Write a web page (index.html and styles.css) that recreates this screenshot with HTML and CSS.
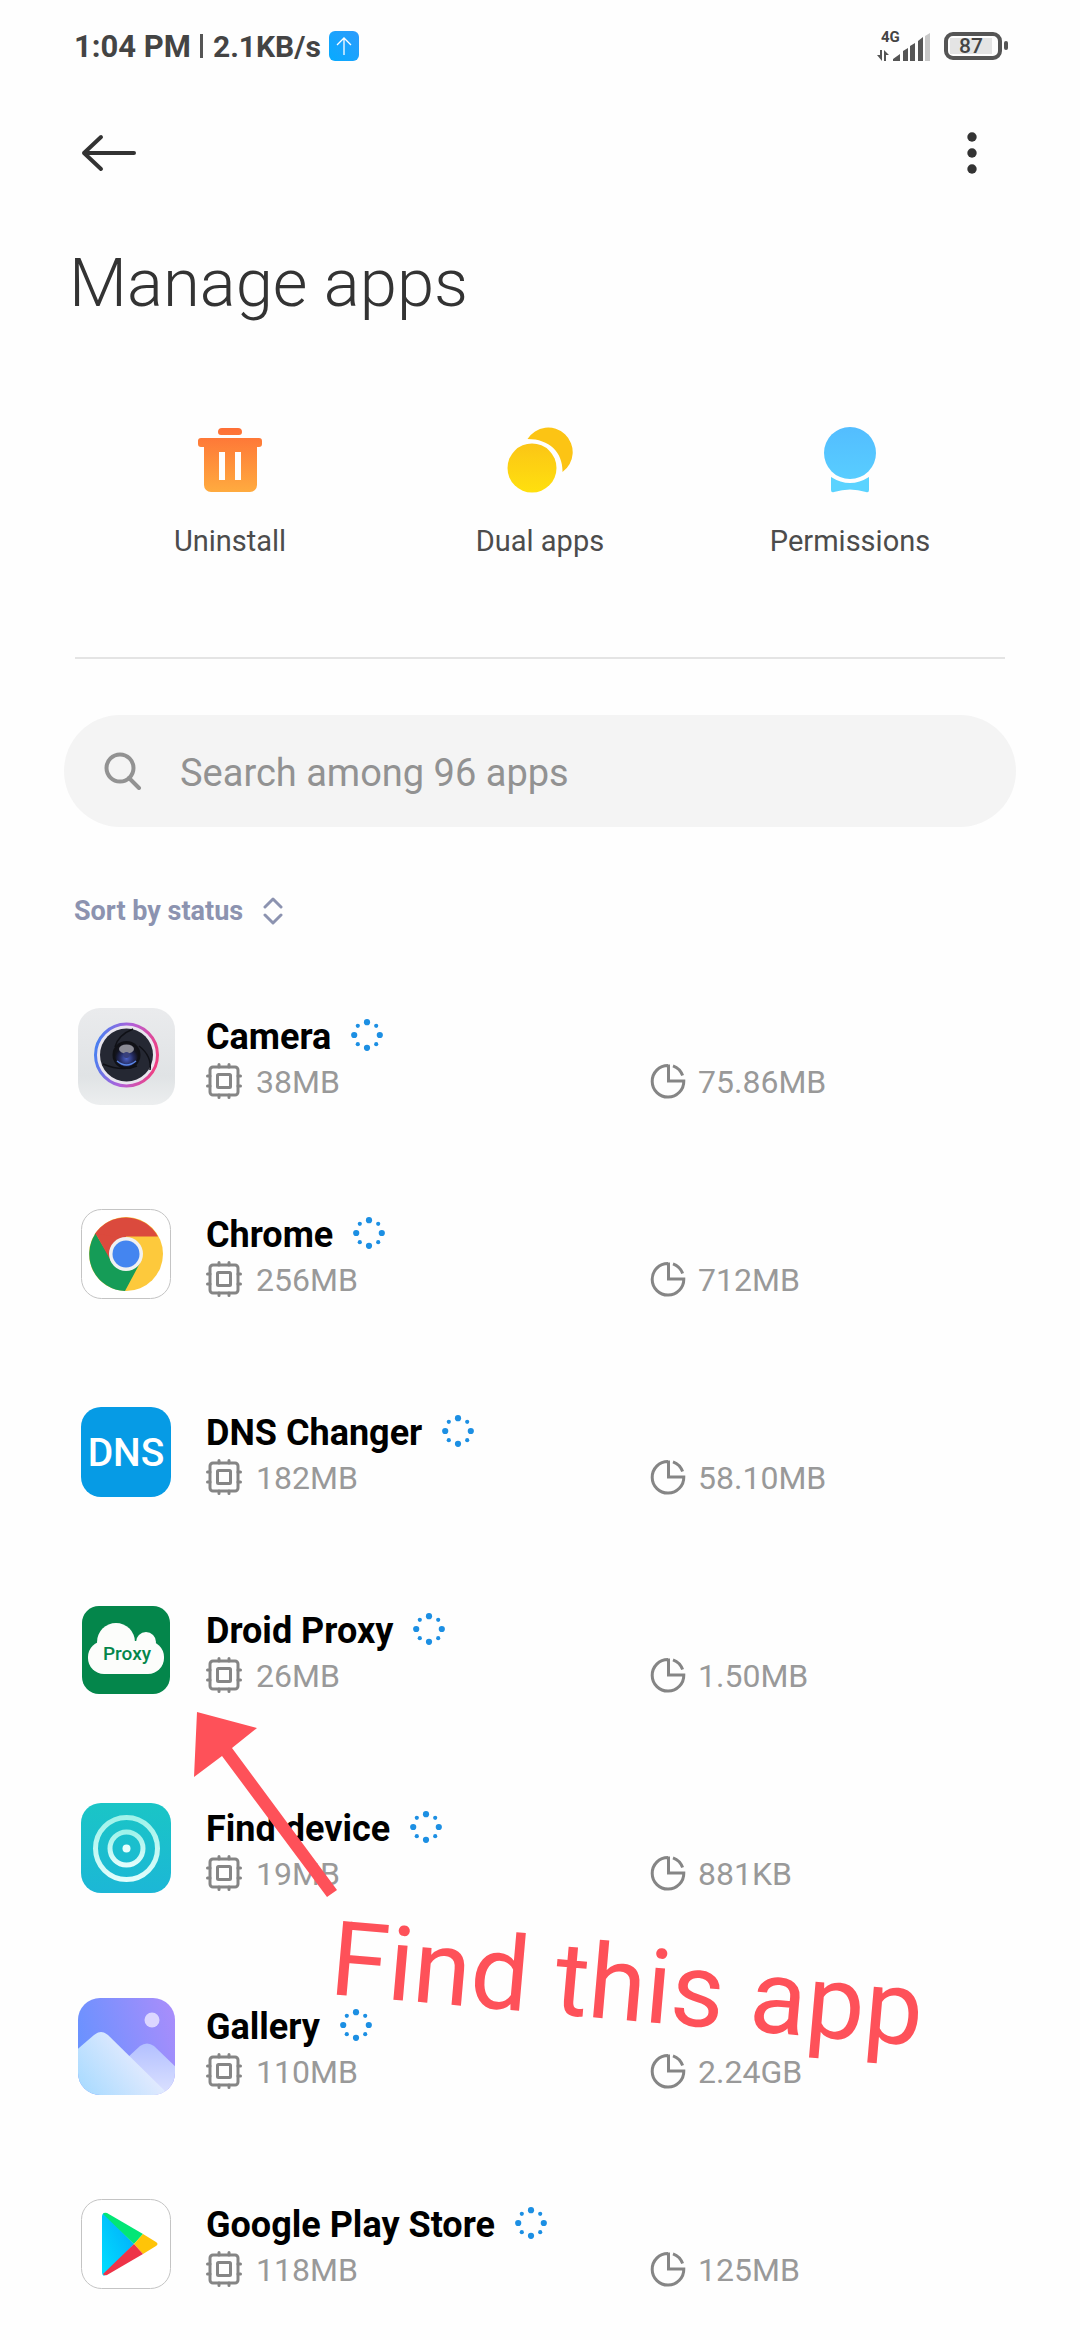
FILE: index.html
```html
<!DOCTYPE html>
<html lang="en">
<head>
<meta charset="utf-8">
<meta name="viewport" content="width=device-width, initial-scale=1">
<title>Manage apps</title>
<link rel="stylesheet" href="styles.css">
</head>
<body>
<svg class="sprite" aria-hidden="true">
  <symbol id="chip" viewBox="0 0 36 36">
    <g fill="none" stroke="#858585" stroke-linecap="round" stroke-width="3">
      <rect x="4" y="4" width="28" height="28" rx="3"/>
      <rect x="11.500" y="11.500" width="13" height="13" rx="1" />
      <path d="M13 4V1.500M23 4V1.500M13 32v2.500M23 32v2.500M4 13H1.500M4 23H1.500M32 13h2.500M32 23h2.500"/>
    </g>
  </symbol>
  <symbol id="pie" viewBox="0 0 36 36">
    <g fill="none" stroke="#858585" stroke-width="3">
      <path d="M18 2.500A15.800 15.800 0 1 0 33.800 18H18.500V1.500"/>
      <path d="M23 2.800A16 16 0 0 1 32.600 12.500"/>
    </g>
  </symbol>
  <symbol id="spinner" viewBox="0 0 32 32">
    <g fill="#1c8fe3">
      <circle cx="16" cy="3.200" r="3.100"/><circle cx="28.800" cy="16" r="3.100"/><circle cx="16" cy="28.800" r="3.100"/><circle cx="3.200" cy="16" r="3.100"/>
      <circle cx="6.800" cy="6.800" r="2.100"/><circle cx="25.200" cy="6.800" r="2.100"/><circle cx="25.200" cy="25.200" r="2.100"/><circle cx="6.800" cy="25.200" r="2.100"/>
    </g>
  </symbol>
</svg>
<div class="screen">
  <div class="status">
    <span class="clock">1:04 PM</span>
    <span class="bar"></span>
    <span class="speed">2.1KB/s</span>
    <svg class="upload" viewBox="0 0 30 30"><defs><linearGradient id="up" x1="1" y1="0" x2="0" y2="1"><stop offset="0" stop-color="#2d9bfc"/><stop offset="1" stop-color="#06abff"/></linearGradient></defs><rect width="30" height="30" rx="6" fill="url(#up)"/><path d="M15 24V7M8 14l7-7 7 7" fill="none" stroke="#fff" stroke-width="1.300"/></svg>
    <div class="signal">
      <span class="network">4G</span>
      <svg class="bars" viewBox="0 0 54 30">
        <g fill="#555"><path d="M3 19h2v11L0 24h3zM7 30V19l5 5H9v6z"/>
        <path d="M16 30v-2l7-5v7zM26 30V20l5-3v13zM33 30V15l5-3v18zM41 30V10l5-4v24z"/></g>
        <path d="M48 30V5l5-3v28z" fill="#c8c8c8"/>
      </svg>
    </div>
    <div class="battery"><span class="level">87</span></div>
  </div>

  <header class="toolbar">
    <button class="icon-btn" type="button" aria-label="Back"><svg width="56" height="40" viewBox="0 0 56 40"><path d="M53 20H3M20 4L3 20l17 16" fill="none" stroke="#333" stroke-width="4" stroke-linecap="round" stroke-linejoin="round"/></svg></button>
    <button class="icon-btn" type="button" aria-label="More options"><svg width="12" height="44" viewBox="0 0 12 44"><g fill="#333"><circle cx="6" cy="6" r="4.700"/><circle cx="6" cy="22" r="4.700"/><circle cx="6" cy="38" r="4.700"/></g></svg></button>
  </header>

  <h1 class="title">Manage apps</h1>

  <nav class="actions">
    <button class="action" type="button">
      <svg viewBox="0 0 66 66"><defs><linearGradient id="or" x1="0" y1="0" x2="0" y2="1"><stop offset="0" stop-color="#fe6f36"/><stop offset="1" stop-color="#ffab3f"/></linearGradient></defs><path fill="url(#or)" fill-rule="evenodd" d="M25 1h16a4 4 0 0 1 4 4 3 3 0 0 1-3 3H24a3 3 0 0 1-3-3 4 4 0 0 1 4-4zM4 11h58a3 3 0 0 1 3 3v3a3 3 0 0 1-3 3h-2v38a7 7 0 0 1-7 7H14a7 7 0 0 1-7-7V20H4a3 3 0 0 1-3-3v-3a3 3 0 0 1 3-3zM22 25v28h6V25zM38 25v28h6V25z"/></svg>
      <span>Uninstall</span>
    </button>
    <button class="action" type="button">
      <svg viewBox="0 0 66 66"><defs><linearGradient id="ye" x1="0" y1="0" x2="0" y2="1"><stop offset="0" stop-color="#fbc516"/><stop offset="1" stop-color="#ffe00e"/></linearGradient></defs><path fill="#fcc414" d="M20.500 12A24.500 24.500 0 1 1 55.500 45C56 26 43 12 20.500 12z"/><circle cx="25" cy="41" r="24.500" fill="url(#ye)"/></svg>
      <span>Dual apps</span>
    </button>
    <button class="action" type="button">
      <svg viewBox="0 0 66 66"><defs><linearGradient id="bl" x1="0" y1="0" x2="0" y2="1"><stop offset="0" stop-color="#53bdff"/><stop offset="1" stop-color="#58cdff"/></linearGradient></defs><circle cx="33" cy="26" r="26" fill="url(#bl)"/><path fill="#5ad3ff" d="M14 50q19 12 38 0v13q0 3-3 2-16-5-32 0-3 1-3-2z"/></svg>
      <span>Permissions</span>
    </button>
  </nav>

  <label class="search">
    <svg width="38" height="38" viewBox="0 0 38 38"><g fill="none" stroke="#929292" stroke-width="4"><circle cx="16" cy="16" r="13.500"/><path d="M25 26l10 10" stroke-linecap="round"/></g></svg>
    <input type="search" placeholder="Search among 96 apps" aria-label="Search apps">
  </label>

  <button class="sort" type="button">Sort by status
    <svg width="20" height="28" viewBox="0 0 20 28"><path d="M2 10l8-8 8 8M2 18l8 8 8-8" fill="none" stroke="#8c93b0" stroke-width="3" stroke-linecap="round" stroke-linejoin="round"/></svg>
  </button>

  <ul class="apps">
    <li class="app">
      <svg class="logo" viewBox="0 0 108 108"><defs>
        <linearGradient id="cb" x1="0" y1="0" x2="0" y2="1"><stop offset="0" stop-color="#eaebed"/><stop offset=".7" stop-color="#e0e3e5"/><stop offset="1" stop-color="#eceeef"/></linearGradient>
        <linearGradient id="cr" x1="0" y1="0.400" x2="1" y2="0.600"><stop offset="0" stop-color="#4a7ff0"/><stop offset=".5" stop-color="#b45fd8"/><stop offset="1" stop-color="#f03f80"/></linearGradient>
        <radialGradient id="cl" cx=".5" cy=".65" r=".5"><stop offset="0" stop-color="#4c62c8"/><stop offset=".6" stop-color="#232a5e"/><stop offset="1" stop-color="#12131c"/></radialGradient></defs>
        <rect x="6" y="6" width="97" height="97" rx="22" fill="url(#cb)"/>
        <circle cx="54.500" cy="53" r="31" fill="#e9e6ee" stroke="url(#cr)" stroke-width="3"/>
        <circle cx="54.500" cy="53" r="26.500" fill="#252833"/>
        <path d="M43 45q3-12 18-18M67 44q13 10 11 24M65 64q-15 6-34-2" fill="none" stroke="#0f1016" stroke-width="1.500"/>
        <circle cx="54.500" cy="53" r="14" fill="#101116"/><circle cx="54.500" cy="53" r="11.500" fill="url(#cl)"/>
        <ellipse cx="54.500" cy="47" rx="7.500" ry="4.500" fill="#8b8b95"/><circle cx="54.500" cy="53" r="3" fill="#39407c"/>
        <path d="M45 59q9.500 8 19 0" fill="none" stroke="#5b88e8" stroke-width="1.500"/></svg>
      <div class="name">Camera <svg class="spin"><use href="#spinner"/></svg></div>
      <div class="mem"><svg><use href="#chip"/></svg>38MB</div>
      <div class="disk"><svg><use href="#pie"/></svg>75.86MB</div>
    </li>
    <li class="app">
      <svg class="logo" viewBox="0 0 108 108">
        <rect x="9.500" y="9.500" width="89" height="89" rx="20" fill="#fff" stroke="#c4c4c4"/>
        <circle cx="54" cy="54" r="37" fill="#fdc93c"/>
        <path d="M54 54L22.500 34.500A37 37 0 0 1 86 36.500H54z" fill="#db4a3d"/>
        <path d="M23.500 33.500A37 37 0 0 0 53 91L68 63 40 61z" fill="#159c57"/>
        <path d="M23.500 33.500L39 61 54 54 50 38z" fill="#db4a3d"/>
        <circle cx="54" cy="54" r="17" fill="#f1f1f1"/><circle cx="54" cy="54" r="13.500" fill="#4485f0"/></svg>
      <div class="name">Chrome <svg class="spin"><use href="#spinner"/></svg></div>
      <div class="mem"><svg><use href="#chip"/></svg>256MB</div>
      <div class="disk"><svg><use href="#pie"/></svg>712MB</div>
    </li>
    <li class="app">
      <svg class="logo" viewBox="0 0 108 108"><rect x="9" y="9" width="90" height="90" rx="20" fill="#069be5"/><text class="dns" x="54" y="68" text-anchor="middle">DNS</text></svg>
      <div class="name">DNS Changer <svg class="spin"><use href="#spinner"/></svg></div>
      <div class="mem"><svg><use href="#chip"/></svg>182MB</div>
      <div class="disk"><svg><use href="#pie"/></svg>58.10MB</div>
    </li>
    <li class="app">
      <svg class="logo" viewBox="0 0 108 108"><rect x="10" y="10" width="88" height="88" rx="17" fill="#04864b"/><g fill="#fcfdfb"><circle cx="44" cy="46" r="19"/><circle cx="74" cy="46" r="10"/><rect x="16" y="45" width="76" height="33" rx="16"/></g><text class="proxy" x="55" y="64" text-anchor="middle">Proxy</text></svg>
      <div class="name">Droid Proxy <svg class="spin"><use href="#spinner"/></svg></div>
      <div class="mem"><svg><use href="#chip"/></svg>26MB</div>
      <div class="disk"><svg><use href="#pie"/></svg>1.50MB</div>
    </li>
    <li class="app">
      <svg class="logo" viewBox="0 0 108 108"><defs><linearGradient id="fd" x1="0" y1="0" x2="0" y2="1"><stop offset="0" stop-color="#1ac5c6"/><stop offset="1" stop-color="#1cb7d6"/></linearGradient><linearGradient id="ri" x1="0" y1="0" x2="0" y2="1"><stop offset="0" stop-color="#9ff3ea"/><stop offset="1" stop-color="#e2fdfc"/></linearGradient></defs><rect x="9" y="9" width="90" height="90" rx="20" fill="url(#fd)"/><g fill="none" stroke="url(#ri)" stroke-width="5"><circle cx="54.500" cy="54.500" r="31"/><circle cx="54.500" cy="54.500" r="16.500"/></g><circle cx="54.500" cy="54.500" r="4" fill="#e8fffd"/></svg>
      <div class="name">Find device <svg class="spin"><use href="#spinner"/></svg></div>
      <div class="mem"><svg><use href="#chip"/></svg>19MB</div>
      <div class="disk"><svg><use href="#pie"/></svg>881KB</div>
    </li>
    <li class="app">
      <svg class="logo" viewBox="0 0 108 108"><defs><linearGradient id="ga" x1="0" y1=".5" x2="1" y2=".2"><stop offset="0" stop-color="#6592ff"/><stop offset="1" stop-color="#ab8dfb"/></linearGradient><linearGradient id="m1" x1="0" y1="1" x2=".8" y2=".6"><stop offset="0" stop-color="#9fd8ff"/><stop offset="1" stop-color="#e2eafe"/></linearGradient><linearGradient id="m2" x1="0" y1="0" x2="0" y2="1"><stop offset="0" stop-color="#b3c0ff"/><stop offset="1" stop-color="#e0e5ff"/></linearGradient><clipPath id="gc"><rect x="6" y="6" width="97" height="97" rx="22"/></clipPath></defs>
        <g clip-path="url(#gc)"><path d="M0 0h108v108H0z" fill="url(#ga)"/><path d="M40 80L68 54q7-5 14 0l26 25v29H40z" fill="url(#m2)"/><path d="M0 62l22-19q7-6 14 0l62 61H0z" fill="url(#m1)"/><circle cx="80" cy="28" r="7.500" fill="#dcd6ff"/></g></svg>
      <div class="name">Gallery <svg class="spin"><use href="#spinner"/></svg></div>
      <div class="mem"><svg><use href="#chip"/></svg>110MB</div>
      <div class="disk"><svg><use href="#pie"/></svg>2.24GB</div>
    </li>
    <li class="app">
      <svg class="logo" viewBox="0 0 108 108"><defs><linearGradient id="pb" x1="1" y1="0" x2="0" y2="1"><stop offset="0" stop-color="#02a8fa"/><stop offset="1" stop-color="#00e0ff"/></linearGradient></defs><rect x="9.500" y="9.500" width="89" height="89" rx="20" fill="#fff" stroke="#c4c4c4"/>
        <path d="M32 23q-2 1-2 3v57q0 2 2 3l30-32z" fill="url(#pb)"/><path d="M31 24q1-2 4-1l36 21-9 10z" fill="#02e676"/><path d="M71 44l13 8q3 2 0 4l-13 8-9-10z" fill="#ffc408"/><path d="M62 54l9 10-36 21q-3 1-4-1z" fill="#ee3348"/></svg>
      <div class="name">Google Play Store <svg class="spin"><use href="#spinner"/></svg></div>
      <div class="mem"><svg><use href="#chip"/></svg>118MB</div>
      <div class="disk"><svg><use href="#pie"/></svg>125MB</div>
    </li>
  </ul>

  <svg class="arrow" viewBox="0 0 150 190" aria-hidden="true"><path fill="#fe5159" d="M3 1L63 17 38 37 143 179 133 186 28 45 0 66z"/></svg>
  <p class="callout">Find this app</p>
</div>
</body>
</html>
```
FILE: styles.css
```css
* { box-sizing: border-box; }

body {
  margin: 0;
  background: #fefefe;
  color: #333;
  font-family: Roboto, "Noto Sans", sans-serif;
}

button {
  padding: 0;
  border: 0;
  background: none;
  color: inherit;
  font: inherit;
}

.sprite { position: absolute; width: 0; height: 0; }

.screen {
  position: relative;
  overflow: hidden;
}

/* status bar */
.status {
  display: flex;
  align-items: center;
  height: 92px;
  padding: 0 72px 0 74px;
  color: #444;
  font-weight: 700;
}

.clock { font-size: 31px; }

.bar {
  width: 3px;
  height: 24px;
  margin: 0 10px 0 9px;
  background: #555;
}

.speed { font-size: 30px; }

.upload {
  width: 30px;
  height: 30px;
  margin-left: 8px;
}

.signal {
  position: relative;
  margin-left: auto;
  height: 30px;
}

.bars { display: block; width: 54px; height: 30px; }

.network {
  position: absolute;
  top: -2px;
  left: 4px;
  font-size: 15px;
  line-height: 16px;
}

.battery {
  position: relative;
  width: 58px;
  height: 28px;
  margin: 0 6px 0 13px;
  border: 4px solid #555;
  border-radius: 9px;
}

.battery::after {
  content: "";
  position: absolute;
  top: 5px;
  right: -10px;
  width: 4px;
  height: 9px;
  border-radius: 2px;
  background: #555;
}

.level {
  display: block;
  width: 42px;
  margin: 2px;
  background: #e4e4e4;
  font-size: 21px;
  font-weight: 500;
  line-height: 16px;
  text-align: center;
}

/* toolbar and title */
.toolbar {
  display: flex;
  align-items: center;
  justify-content: space-between;
  height: 122px;
  padding: 0 102px 0 81px;
}

.icon-btn { display: flex; }

.title {
  margin: 30px 69px 0;
  font-size: 67px;
  font-weight: 300;
  line-height: 78px;
}

/* shortcuts */
.actions {
  display: grid;
  grid-template-columns: repeat(3, 1fr);
  margin: 0 75px;
  padding: 105px 0 99px;
  border-bottom: 2px solid #e4e4e4;
}

.action {
  display: flex;
  flex-direction: column;
  align-items: center;
  gap: 31px;
  color: #4c4c4c;
  font-size: 29px;
  line-height: 34px;
}

.action svg { width: 66px; height: 66px; }

/* search */
.search {
  display: flex;
  align-items: center;
  gap: 38px;
  height: 112px;
  margin: 56px 64px 0;
  padding: 0 40px;
  border-radius: 56px;
  background: #f4f4f4;
}

.search input {
  flex: 1;
  min-width: 0;
  padding: 4px 0 0;
  border: 0;
  outline: 0;
  background: none;
  color: #333;
  font: 38px/44px Roboto, "Noto Sans", sans-serif;
}

.search input::placeholder { color: #929292; opacity: 1; }

.sort {
  display: flex;
  align-items: center;
  gap: 20px;
  margin: 68px 74px 0;
  color: #8c93b0;
  font-size: 27px;
  font-weight: 700;
  line-height: 32px;
}

/* app list */
.apps {
  margin: 30px 0 0;
  padding: 0;
  list-style: none;
}

.app {
  display: grid;
  grid-template-columns: 108px 418px 1fr;
  grid-template-rows: 52px 46px;
  align-content: center;
  align-items: end;
  column-gap: 26px;
  height: 198px;
  padding: 0 72px;
}

.app:last-child {
  height: 195px;
  padding-top: 3px;
}

.logo {
  grid-row: 1 / 3;
  align-self: center;
  width: 108px;
  height: 108px;
}

.name {
  display: flex;
  grid-column: 2 / 4;
  align-items: center;
  gap: 20px;
  color: #000;
  font-size: 36px;
  font-weight: 700;
  line-height: 44px;
  white-space: nowrap;
}

.spin {
  width: 32px;
  height: 32px;
  margin-bottom: 4px;
}

.mem,
.disk {
  display: flex;
  align-items: center;
  gap: 14px;
  color: #999;
  font-size: 32px;
  line-height: 46px;
}

.disk { gap: 12px; }

.mem svg,
.disk svg {
  width: 36px;
  height: 36px;
  margin-bottom: 2px;
}

.dns { fill: #fff; font-size: 39px; font-weight: 500; }
.proxy { fill: #04864b; font-size: 19px; font-weight: 500; }

/* annotation over the list */
.arrow {
  position: absolute;
  top: 1711px;
  left: 194px;
  width: 150px;
  height: 190px;
}

.callout {
  position: absolute;
  top: 1897px;
  left: 326px;
  margin: 0;
  color: #fe5159;
  font-size: 104px;
  line-height: 124px;
  transform: rotate(5deg);
  transform-origin: 0 100%;
  white-space: nowrap;
}
```
